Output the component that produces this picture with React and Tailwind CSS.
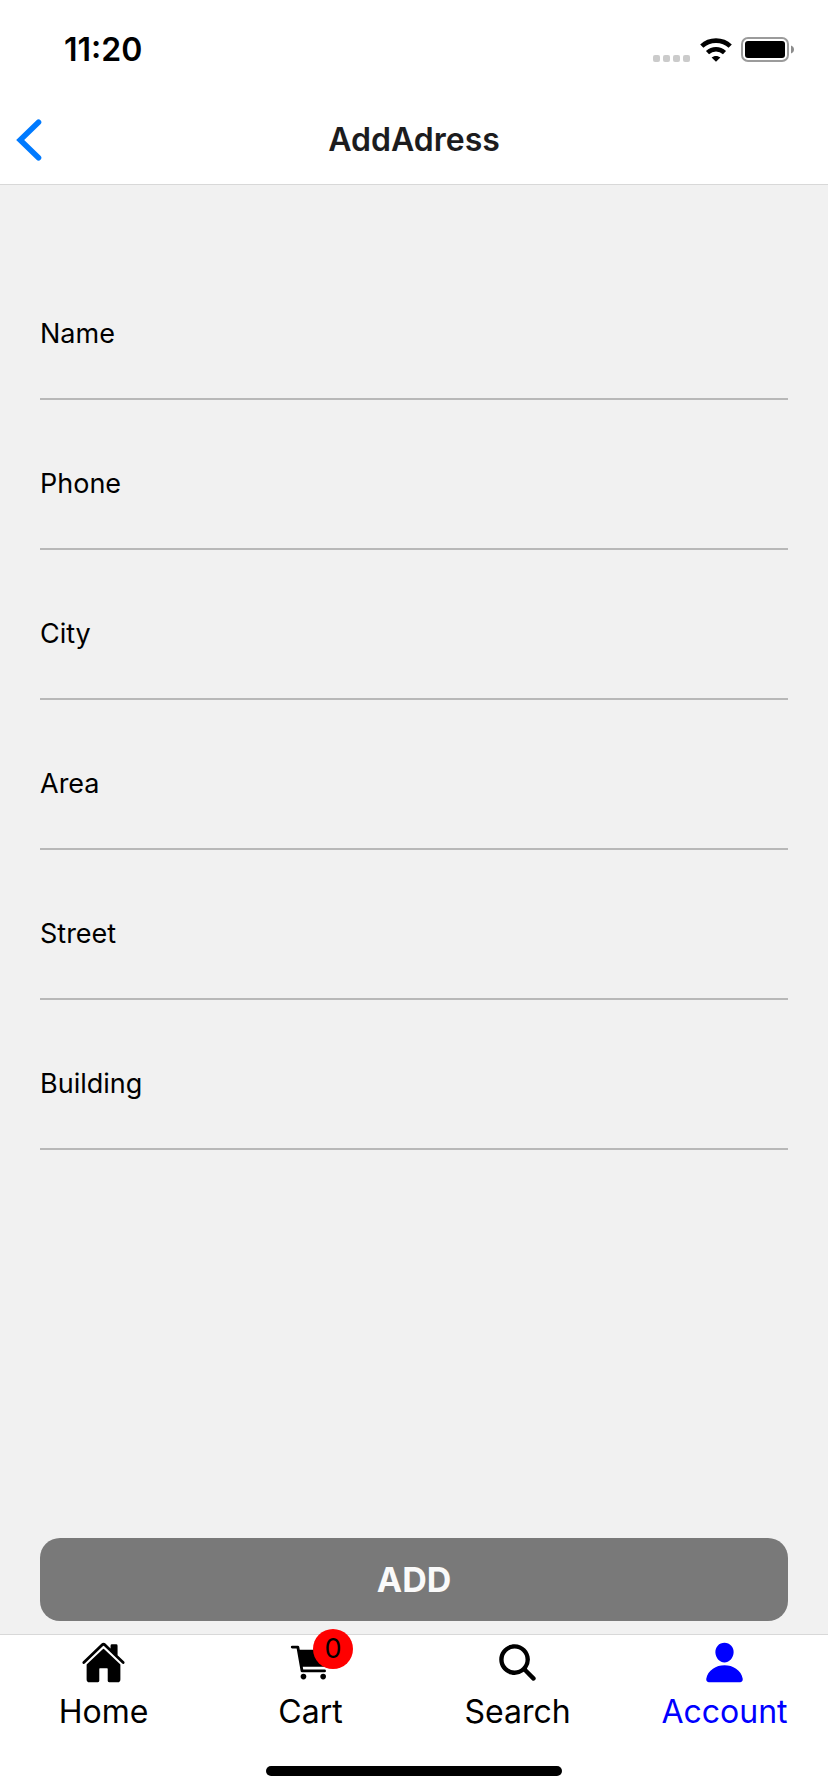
import { IoCart, IoHome, IoPerson, IoSearch } from "react-icons/io5";

const fields = ["Name", "Phone", "City", "Area", "Street", "Building"];

const tabs = [
  { label: "Home", Icon: IoHome },
  { label: "Cart", Icon: IoCart, badge: 0 },
  { label: "Search", Icon: IoSearch },
  { label: "Account", Icon: IoPerson, active: true },
];

function WifiIcon() {
  return (
    <svg viewBox="0 0 32 24" className="h-6 w-8" fill="none" aria-hidden="true">
      <path d="M1.800 8.200C9.500 0.700 22.500 0.700 30.200 8.200" stroke="#000" strokeWidth="4.600" />
      <path d="M7.500 14.600C12.400 10.200 19.600 10.200 24.500 14.600" stroke="#000" strokeWidth="4.600" />
      <path d="M16 23.800L11.600 19.600C14 17.400 18 17.400 20.400 19.600Z" fill="#000" />
    </svg>
  );
}

function BatteryIcon() {
  return (
    <svg viewBox="0 0 54 26" className="h-[26px] w-[54px]" fill="none" aria-hidden="true">
      <rect x="1" y="1" width="46" height="23" rx="6" stroke="#9b9b9b" strokeWidth="2" />
      <rect x="4" y="4" width="40" height="17" rx="3" fill="#000" />
      <path d="M50 8.500C52 9.200 53 10.700 53 12.500S52 15.800 50 16.500Z" fill="#8c8c8c" />
    </svg>
  );
}

function StatusBar() {
  return (
    <div className="flex h-24 items-center justify-between pt-1 pr-[33px] pl-16">
      <span className="text-[32px] leading-10 font-semibold text-black">11:20</span>
      <div className="flex items-center">
        <div className="mt-4 mr-[10px] flex gap-[3px]">
          {[0, 1, 2, 3].map((dot) => (
            <span key={dot} className="size-[7px] rounded-xs bg-[#cbcbcb]" />
          ))}
        </div>
        <WifiIcon />
        <div className="ml-[9px]">
          <BatteryIcon />
        </div>
      </div>
    </div>
  );
}

function Header() {
  return (
    <header className="border-b border-[#d8d8d8] bg-white">
      <StatusBar />
      <div className="grid h-22 grid-cols-[1fr_auto_1fr] items-center px-4">
        <button type="button" aria-label="Back" className="size-11 justify-self-start">
          <svg viewBox="0 0 26 42" className="h-[42px] w-[26px]" fill="none" aria-hidden="true">
            <path
              d="M22.500 3.200L4.200 21L22.500 38.800"
              stroke="#007aff"
              strokeWidth="5.600"
              strokeLinecap="round"
              strokeLinejoin="miter"
            />
          </svg>
        </button>
        <h1 className="text-[32px] leading-10 font-semibold text-[#1c1c1e]">AddAdress</h1>
      </div>
    </header>
  );
}

function Field({ label }) {
  const id = label.toLowerCase();
  return (
    <div className="flex flex-col">
      <label htmlFor={id} className="text-[27px] leading-9 text-black">
        {label}
      </label>
      <input
        id={id}
        name={id}
        type="text"
        className="h-12 w-full border-b-2 border-[#b8b8b8] bg-transparent text-[27px] outline-none"
      />
    </div>
  );
}

function TabBar() {
  return (
    <nav className="border-t border-[#d8d8d8] bg-white">
      <div className="grid grid-cols-4 pt-[5px]">
        {tabs.map(({ label, Icon, badge, active }) => (
          <a
            key={label}
            href={`#${label.toLowerCase()}`}
            aria-current={active ? "page" : undefined}
            className={`flex flex-col items-center ${active ? "text-[#0000ff]" : "text-black"}`}
          >
            <span className="relative">
              <Icon className="size-[45px]" aria-hidden="true" />
              {badge !== undefined && (
                <span className="absolute -top-[11px] left-[25px] flex size-10 items-center justify-center rounded-full bg-[#ff0000] text-[27px] leading-8 text-black">
                  {badge}
                </span>
              )}
            </span>
            <span className="mt-[7px] text-[32px] leading-10">{label}</span>
          </a>
        ))}
      </div>
      <div className="flex justify-center pt-[34px] pb-4">
        <span className="h-[10px] w-[296px] rounded-full bg-black" />
      </div>
    </nav>
  );
}

export default function App() {
  return (
    <div className="flex min-h-screen flex-col bg-[#f1f1f1] font-['Inter','Liberation_Sans',sans-serif]">
      <Header />
      <main className="flex grow flex-col px-10 pt-[131px] pb-[13px]">
        <form className="flex grow flex-col justify-between">
          <div className="flex flex-col gap-[66px]">
            {fields.map((label) => (
              <Field key={label} label={label} />
            ))}
          </div>
          <button
            type="button"
            className="h-[83px] w-full rounded-[20px] bg-[#797979] text-[34px] leading-10 font-bold text-[#fafafa]"
          >
            ADD
          </button>
        </form>
      </main>
      <TabBar />
    </div>
  );
}
